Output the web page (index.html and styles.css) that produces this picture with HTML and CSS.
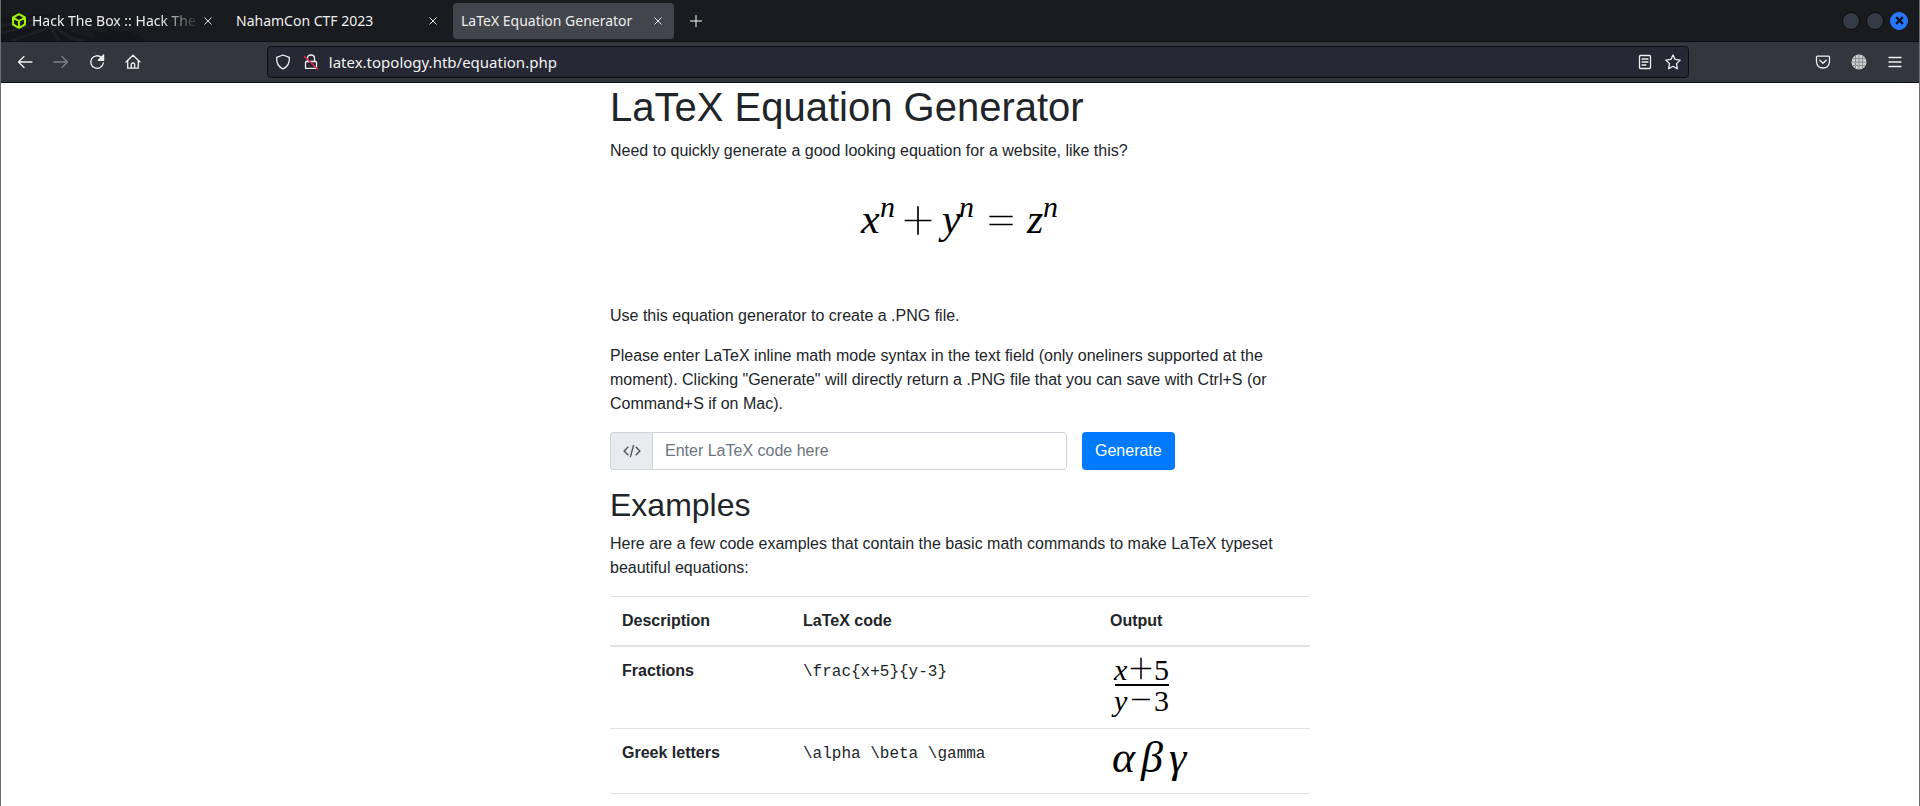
FILE: index.html
```html
<!DOCTYPE html>
<html lang="en">
<head>
<meta charset="utf-8">
<title>LaTeX Equation Generator</title>
<link rel="stylesheet" href="styles.css">
</head>
<body>
<div class="window">
  <header class="tabbar">
    <svg class="tabbar-art" viewBox="0 0 150 41" aria-hidden="true">
      <path d="M0 17L50 14L58 25Q75 36 95 38L88 29Q100 34 108 33L104 26Q114 34 125 31Q138 34 145 41H0Z" fill="#14161a"/>
      <path d="M0 26L48 17L55 27Q68 40 84 41M0 33L45 22M10 41L50 27L58 41" fill="none" stroke="#1e2025" stroke-width="3"/>
    </svg>
    <div class="tabs">
      <div class="tab">
        <svg class="favicon" viewBox="0 0 16 16" aria-hidden="true"><path d="M8 1.2L14 4.5V11.5L8 14.8L2 11.5V4.5ZM2.4 4.8L8 8L13.6 4.8M8 8V14.5" fill="none" stroke="#9fef00" stroke-width="2" stroke-linejoin="round"/></svg>
        <span class="tab-label tab-label-fade">Hack The Box :: Hack The Box</span>
        <button class="tab-close" aria-label="Close tab"><svg viewBox="0 0 8 8"><path d="M0.5 0.5L7.5 7.5M7.5 0.5L0.5 7.5"/></svg></button>
      </div>
      <div class="tab">
        <span class="tab-label">NahamCon CTF 2023</span>
        <button class="tab-close" aria-label="Close tab"><svg viewBox="0 0 8 8"><path d="M0.5 0.5L7.5 7.5M7.5 0.5L0.5 7.5"/></svg></button>
      </div>
      <div class="tab tab-active">
        <span class="tab-label">LaTeX Equation Generator</span>
        <button class="tab-close" aria-label="Close tab"><svg viewBox="0 0 8 8"><path d="M0.5 0.5L7.5 7.5M7.5 0.5L0.5 7.5"/></svg></button>
      </div>
      <button class="new-tab" aria-label="New tab"><svg viewBox="0 0 12 12"><path d="M6 0V12M0 6H12"/></svg></button>
    </div>
    <div class="window-buttons">
      <button class="win-btn" aria-label="Minimize"></button>
      <button class="win-btn" aria-label="Maximize"></button>
      <button class="win-btn win-close" aria-label="Close window"><svg viewBox="0 0 8 8"><path d="M1 1L7 7M7 1L1 7"/></svg></button>
    </div>
  </header>

  <nav class="toolbar">
    <div class="tool-group">
      <button class="tool" aria-label="Back"><svg viewBox="0 0 16 16"><path d="M15 8H1.5M7 2.5L1.5 8L7 13.5"/></svg></button>
      <button class="tool tool-disabled" aria-label="Forward"><svg viewBox="0 0 16 16"><path d="M1 8H14.5M9 2.5L14.5 8L9 13.5"/></svg></button>
      <button class="tool" aria-label="Reload"><svg viewBox="0 0 16 16"><path d="M12.5 3.6A6.3 6.3 0 1 0 14.3 9"/><path d="M9.3 6.3H14.6V1Z" class="solid"/></svg></button>
      <button class="tool" aria-label="Home"><svg viewBox="0 0 16 16"><path d="M1 8L8 1.3L15 8M2.7 6.8V14.2H13.3V6.8M6.3 14V10.5Q6.3 9 8 9T9.7 10.5V14"/></svg></button>
    </div>
    <div class="spring"></div>
    <div class="urlbar">
      <button class="url-icon" aria-label="Tracking protection"><svg viewBox="0 0 16 16"><path d="M8 1L14.3 3.3C14.8 9 12.3 13 8 15C3.7 13 1.2 9 1.7 3.3Z"/></svg></button>
      <button class="url-icon" aria-label="Connection not secure"><svg viewBox="0 0 16 16"><path d="M4.5 7V4.2Q4.5 1 8 1T11.5 4.2V7M3.5 7.5H12.5Q13.5 7.5 13.5 8.5V14.3H2.5V8.5Q2.5 7.5 3.5 7.5Z"/><path d="M1.5 2.5L14.5 15" class="slash"/></svg></button>
      <input class="url-input" type="text" aria-label="Address" value="latex.topology.htb/equation.php">
      <button class="url-icon" aria-label="Reader view"><svg viewBox="0 0 16 16"><path d="M3.5 1.5H12.5Q13.5 1.5 13.5 2.5V13.5Q13.5 14.5 12.5 14.5H3.5Q2.5 14.5 2.5 13.5V2.5Q2.5 1.5 3.5 1.5ZM5 5H11M5 8H11M5 11H9"/></svg></button>
      <button class="url-icon" aria-label="Bookmark"><svg viewBox="0 0 16 16"><path d="M8 0.9L10.1 5.4L15.2 6.1L11.5 9.6L12.4 14.8L8 12.3L3.6 14.8L4.5 9.6L0.8 6.1L5.9 5.4Z"/></svg></button>
    </div>
    <div class="spring"></div>
    <div class="tool-group">
      <button class="tool" aria-label="Pocket"><svg viewBox="0 0 16 16"><path d="M2.5 2.2H13.5Q14.5 2.2 14.5 3.2V7.5Q14 14 8 14T1.5 7.5V3.2Q1.5 2.2 2.5 2.2ZM4.8 6.3L8 9.3L11.2 6.3"/></svg></button>
      <button class="tool" aria-label="Proxy"><svg viewBox="0 0 16 16"><circle cx="8" cy="8" r="7.5" fill="#d0d0d0" stroke="none"/><path d="M8 1V15M1 8H15M2 4.5H14M2 11.5H14M4.5 2V14M11.5 2V14" class="grid"/></svg></button>
      <button class="tool" aria-label="Menu"><svg viewBox="0 0 16 16"><path d="M2 3.5H14M2 8H14M2 12.5H14"/></svg></button>
    </div>
  </nav>

  <main class="page">
    <div class="container">
      <h1>LaTeX Equation Generator</h1>
      <p>Need to quickly generate a good looking equation for a website, like this?</p>
      <svg class="equation" viewBox="0 0 220 109" role="img" aria-label="x to the n plus y to the n equals z to the n">
        <g class="math">
          <text x="11" y="54" class="m42">x</text><text x="30" y="38" class="m30">n</text>
          <text x="68" y="60" class="op" text-anchor="middle">+</text>
          <text x="92" y="54" class="m42">y</text><text x="109" y="38" class="m30">n</text>
          <text x="151" y="60" class="op" text-anchor="middle">=</text>
          <text x="177" y="54" class="m42">z</text><text x="193" y="38" class="m30">n</text>
        </g>
      </svg>
      <p>Use this equation generator to create a .PNG file.</p>
      <p>Please enter LaTeX inline math mode syntax in the text field (only oneliners supported at the moment). Clicking "Generate" will directly return a .PNG file that you can save with Ctrl+S (or Command+S if on Mac).</p>
      <form class="generator">
        <div class="input-group">
          <label class="addon" for="eqn" aria-label="LaTeX code"><svg viewBox="0 0 16 16"><path d="M4.7 4.3L1 8L4.7 11.7M11.3 4.3L15 8L11.3 11.7M9.5 2.5L6.5 13.5"/></svg></label>
          <input id="eqn" type="text" placeholder="Enter LaTeX code here">
        </div>
        <button class="btn" type="button">Generate</button>
      </form>
      <h2>Examples</h2>
      <p>Here are a few code examples that contain the basic math commands to make LaTeX typeset beautiful equations:</p>
      <table class="examples">
        <thead>
          <tr><th class="col-desc" scope="col">Description</th><th class="col-code" scope="col">LaTeX code</th><th scope="col">Output</th></tr>
        </thead>
        <tbody>
          <tr>
            <th scope="row">Fractions</th><td><code>\frac{x+5}{y-3}</code></td>
            <td><svg class="output-frac" viewBox="0 0 64 57" role="img" aria-label="x plus 5 over y minus 3"><g class="math">
              <text x="4" y="21" class="m30">x</text><text x="31" y="24" class="op-small" text-anchor="middle">+</text><text x="44" y="21" class="r30">5</text>
              <text x="4" y="52" class="m30">y</text><text x="31" y="55" class="op-small" text-anchor="middle">−</text><text x="44" y="52" class="r30">3</text></g>
              <path d="M5 26H59" stroke="#000" stroke-width="2"/></svg></td>
          </tr>
          <tr>
            <th scope="row">Greek letters</th><td><code>\alpha \beta \gamma</code></td>
            <td><svg class="output-greek" viewBox="0 0 84 40" role="img" aria-label="alpha beta gamma"><g class="math">
              <text x="2" y="31" class="m44">α</text><text x="31" y="31" class="m44">β</text><text x="59" y="31" class="m44">γ</text></g></svg></td>
          </tr>
        </tbody>
      </table>
    </div>
  </main>
</div>
</body>
</html>
```
FILE: styles.css
```css
*, *::before, *::after { box-sizing: border-box; }

html, body { margin: 0; height: 100%; }

body {
  background: #fff;
  color: #212529;
  font: 16px/24px "Liberation Sans", Arial, sans-serif;
}

button, input { font: inherit; }

button {
  border: 0;
  padding: 0;
  background: none;
  color: inherit;
  display: flex;
  align-items: center;
  justify-content: center;
}

.window {
  height: 100vh;
  display: flex;
  flex-direction: column;
  overflow: hidden;
  border: solid #6b6d70;
  border-width: 0 1px;
}

/* Tab strip */
.tabbar {
  position: relative;
  flex: none;
  height: 42px;
  display: flex;
  justify-content: space-between;
  align-items: center;
  background: #1a1b1f;
  border-bottom: 1px solid #0c0d10;
  color: #eee;
  font: 14px/20px "Noto Sans", sans-serif;
}

.tabbar-art {
  position: absolute;
  left: 0;
  top: 0;
  width: 150px;
  height: 41px;
}

.tabs {
  position: relative;
  display: flex;
  gap: 4px;
  padding: 0 2px;
}

.tab {
  width: 221px;
  height: 36px;
  padding: 0 8px;
  display: flex;
  align-items: center;
  border-radius: 4px;
}

.tab-active { background: #42454c; }

.favicon { width: 16px; height: 16px; margin-right: 5px; flex: none; }

.tab-label {
  flex: 1;
  overflow: hidden;
  white-space: nowrap;
}

.tab-label-fade {
  mask-image: linear-gradient(to left, transparent, #000 40px);
}

.tab-close { width: 16px; height: 16px; flex: none; }
.tab-close svg { width: 8px; height: 8px; stroke: #e6e6e6; stroke-width: 1; }

.new-tab { width: 36px; height: 36px; }
.new-tab svg { width: 12px; height: 12px; stroke: #fff; stroke-width: 1; }

.window-buttons { display: flex; gap: 6px; padding-right: 11px; }

.win-btn {
  width: 18px;
  height: 18px;
  border-radius: 50%;
  background: #363b48;
  border: 1px solid #0a0a0c;
}

.win-close { background: #2777ff; border-color: #2777ff; }
.win-close svg { width: 9px; height: 9px; stroke: #0b1220; stroke-width: 2; }

/* Navigation toolbar */
.toolbar {
  flex: none;
  height: 41px;
  display: flex;
  align-items: center;
  padding: 0 6px;
  background: #33363d;
  border-bottom: 1px solid #0c0d10;
  color: #f4f4f4;
}

.tool-group { display: flex; }
.tool { width: 36px; height: 32px; }
.tool-disabled { opacity: 0.4; }

.tool svg, .url-icon svg {
  width: 16px;
  height: 16px;
  fill: none;
  stroke: #f0f0f0;
  stroke-width: 1.3;
  stroke-linejoin: round;
  stroke-linecap: round;
}

.tool svg .solid { fill: #f0f0f0; }
.tool svg .grid { stroke: #8b8d91; stroke-width: 1; }
.url-icon svg .slash { stroke: #e22850; stroke-width: 1.5; }

.spring { flex: 4; }

.urlbar {
  flex: 49;
  height: 32px;
  display: flex;
  align-items: center;
  padding: 0 1px;
  background: #262834;
  border: 1px solid #0e0f13;
  border-radius: 4px;
}

.url-icon { width: 28px; height: 28px; flex: none; }

.url-input {
  flex: 1;
  min-width: 0;
  border: 0;
  outline: 0;
  padding: 0 4px;
  background: transparent;
  color: #f2f2f2;
  font: 15px/24px "Noto Sans", sans-serif;
}

/* Page content */
.page { flex: 1; min-height: 0; overflow: hidden; background: #fff; }

.container { max-width: 700px; margin: 0 auto; }

h1, h2 { margin: 0 0 8px; font-weight: 400; }
h1 { font-size: 40px; line-height: 48px; }
h2 { font-size: 32px; line-height: 38px; }
p { margin: 0 0 16px; }

.equation {
  display: block;
  width: 220px;
  height: 109px;
  margin: 0 auto 16px;
}

.math { fill: #000; font-family: "Liberation Serif", "Times New Roman", serif; }
.m30 { font-size: 30px; font-style: italic; }
.m42 { font-size: 42px; font-style: italic; }
.m44 { font-size: 44px; font-style: italic; }
.r30 { font-size: 30px; }
.op, .op-small {
  font-family: Lato, sans-serif;
  font-weight: 200;
  stroke: #000;
  stroke-width: 1;
}
.op { font-size: 56px; }
.op-small { font-size: 42px; }

.generator { display: flex; gap: 15px; margin-bottom: 16px; }

.input-group { display: flex; width: 457px; }

.addon {
  width: 42px;
  height: 38px;
  display: flex;
  align-items: center;
  justify-content: center;
  background: #e9ecef;
  border: 1px solid #ced4da;
  border-right: 0;
  border-radius: 4px 0 0 4px;
}

.addon svg { width: 18px; height: 18px; fill: none; stroke: #495057; stroke-width: 1.2; }

.input-group input {
  flex: 1;
  min-width: 0;
  height: 38px;
  padding: 6px 12px;
  border: 1px solid #ced4da;
  border-radius: 0 4px 4px 0;
  background: #fff;
  color: #495057;
}

.input-group input::placeholder { color: #6c757d; opacity: 1; }

.btn {
  height: 38px;
  padding: 0 13px;
  border-radius: 4px;
  background: #007bff;
  color: #fff;
}

.examples {
  width: 100%;
  border-collapse: collapse;
  border-bottom: 1px solid #dee2e6;
  table-layout: fixed;
}
.examples th, .examples td {
  padding: 12px;
  border-top: 1px solid #dee2e6;
  text-align: left;
  vertical-align: top;
}
.examples thead th { border-bottom: 2px solid #dee2e6; }
.col-desc { width: 181px; }
.col-code { width: 307px; }

code { font: 16px/24px "Liberation Mono", monospace; }

.output-frac { display: block; width: 64px; height: 57px; overflow: visible; }
.output-greek { display: block; width: 84px; height: 40px; overflow: visible; }
```
